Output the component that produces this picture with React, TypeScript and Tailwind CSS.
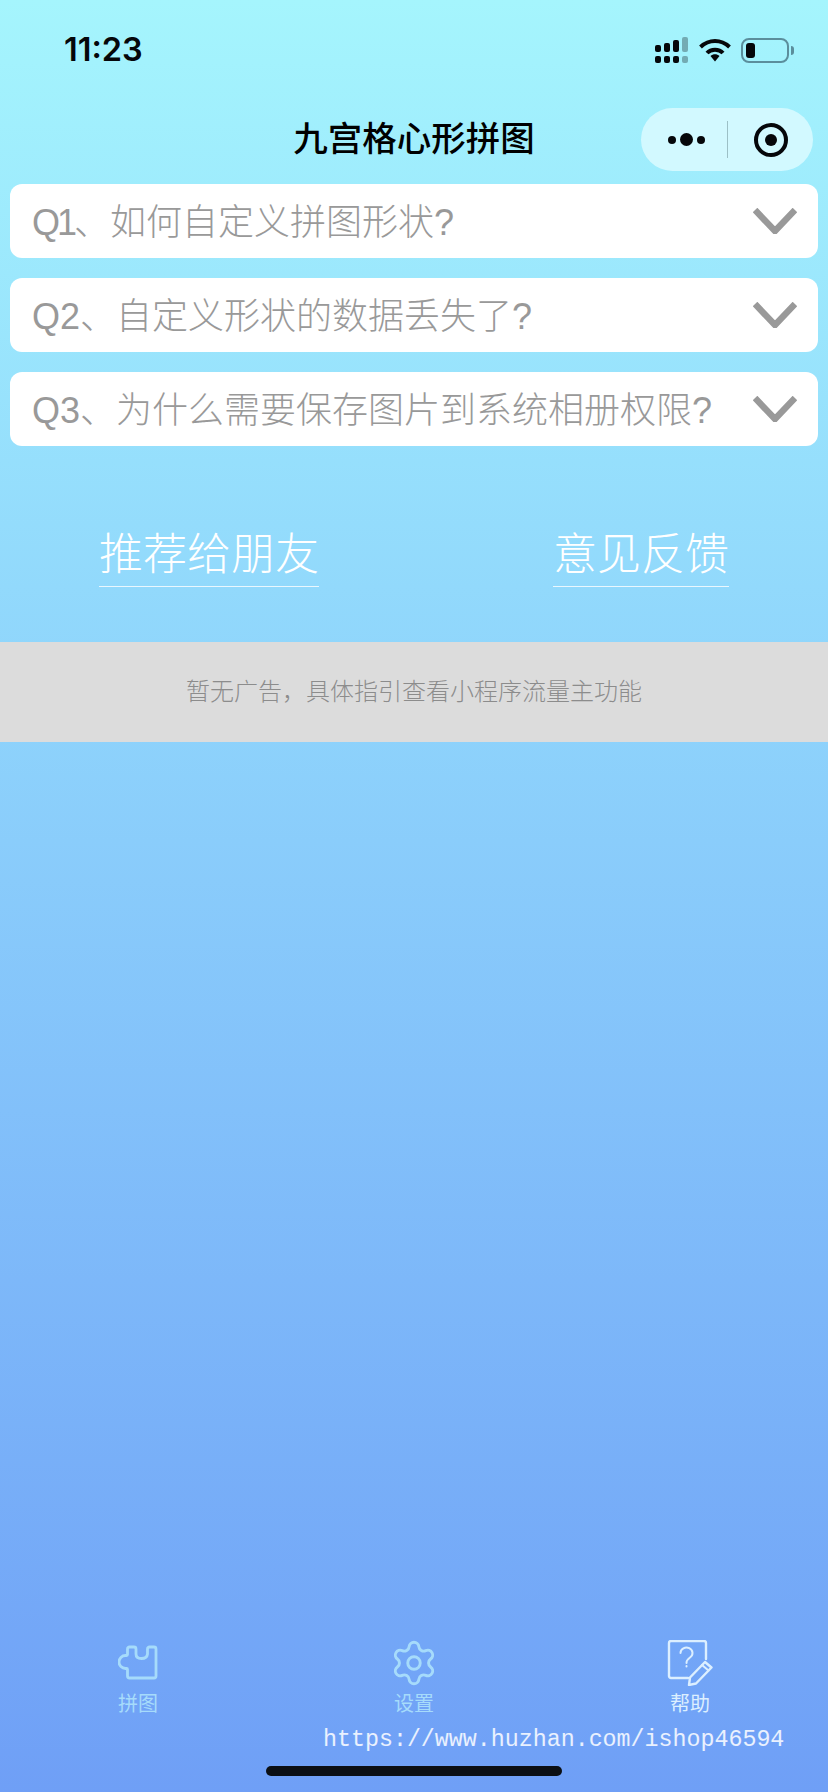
import React from "react";
import { Settings } from "lucide-react";

const questions = [
  { no: "Q1", text: "、如何自定义拼图形状?", narrow: true },
  { no: "Q2", text: "、自定义形状的数据丢失了?", narrow: false },
  { no: "Q3", text: "、为什么需要保存图片到系统相册权限?", narrow: false },
];

const SignalIcon = () => (
  <svg width="34" height="26" viewBox="0 0 34 26" fill="#05070a">
    <rect x="0" y="8" width="6" height="7" rx="2" />
    <rect x="9" y="6" width="6" height="9" rx="2" />
    <rect x="18" y="3" width="6" height="12" rx="2" />
    <rect x="27" y="0" width="6" height="15" rx="2" opacity="0.3" />
    <rect x="0" y="19" width="6" height="7" rx="2" />
    <rect x="9" y="19" width="6" height="7" rx="2" />
    <rect x="18" y="19" width="6" height="7" rx="2" />
    <rect x="27" y="19" width="6" height="7" rx="2" opacity="0.3" />
  </svg>
);

const WifiIcon = () => (
  <svg width="32" height="24" viewBox="0 0 32 24" fill="none" stroke="#05070a" strokeWidth="4">
    <path d="M1.500 9 C 10 1, 22 1, 30.500 9" />
    <path d="M8 15 C 12 10.5, 20 10.5, 24 15" />
    <path d="M11.5 18 L16 23.5 L20.5 18 C 18 15.5, 14 15.5, 11.5 18 Z" fill="#05070a" stroke="none" />
  </svg>
);

const BatteryIcon = () => (
  <div className="flex items-center gap-[2px]">
    <div className="w-[48px] h-[25px] rounded-[8px] border-2 border-[#5b8e9c] p-[3px]">
      <div className="w-[9px] h-full rounded-[3px] bg-[#05070a]" />
    </div>
    <div className="w-[3px] h-[9px] rounded-r-full bg-[#5b8e9c]" />
  </div>
);

const PuzzleIcon = () => (
  <svg width="40" height="36" viewBox="0 0 40 36" fill="none" stroke="currentColor" strokeWidth="2.8" strokeLinejoin="round">
    <path d="M11.500 2 H16 a2 2 0 0 1 2 2 V9 q0 4.500 5.500 4.500 T29.500 9 V4 a2 2 0 0 1 2-2 h4.500 a2 2 0 0 1 2 2 V31 a2 2 0 0 1-2 2 H11.500 a2 2 0 0 1-2-2 V24.500 q0-1-1-1 H7.500 a6.500 6.500 0 0 1 0-13 H8.500 q1 0 1-1 V4 a2 2 0 0 1 2-2 Z" />
  </svg>
);

const HelpIcon = () => (
  <svg width="46" height="46" viewBox="0 0 46 46" fill="none" stroke="currentColor" strokeWidth="2.4" strokeLinecap="round" strokeLinejoin="round">
    <path d="M21 38 H4 a2 2 0 0 1-2-2 V3 a2 2 0 0 1 2-2 h33 a2 2 0 0 1 2 2 v16" />
    <path d="M13.500 13 a6 5.500 0 1 1 9.500 4.500 q-3.500 2.500 -3.500 5.500" strokeWidth="2" />
    <path d="M19.500 26 v0.500" strokeWidth="2" />
    <path d="M22 45 L23 37.500 L38 22 L44.500 27.500 L29 43.500 Z" />
    <path d="M35 25 L41.500 30.500" strokeWidth="2" />
  </svg>
);

const tabs = [
  { label: "拼图", icon: <PuzzleIcon />, active: false },
  { label: "设置", icon: <Settings size={50} strokeWidth={1.4} />, active: false },
  { label: "帮助", icon: <HelpIcon />, active: true },
];

export default function App() {
  return (
    <div className="relative flex flex-col min-h-[1792px] w-[828px] overflow-hidden bg-gradient-to-b from-[#a5f5fd] to-[#6f9ff6] font-['Liberation_Sans','Noto_Sans_CJK_SC',sans-serif]">
      {/* status bar */}
      <div className="flex items-center justify-between h-[100px] pl-[64px] pr-[34px]">
        <span className="font-['Inter',sans-serif] text-[32.5px] font-semibold text-[#05070a]">11:23</span>
        <div className="flex items-center gap-[10px]">
          <SignalIcon />
          <WifiIcon />
          <BatteryIcon />
        </div>
      </div>

      {/* nav */}
      <div className="grid grid-cols-[1fr_auto_1fr] items-center h-[84px] pt-[8px] pb-[13px] px-[15px]">
        <div />
        <h1 className="text-[34.5px] font-medium text-black">九宫格心形拼图</h1>
        <div className="flex justify-end">
          <div className="flex items-center w-[172px] h-[63px] rounded-full bg-[#d2f9ff]">
            <div className="flex items-center justify-center gap-[4px] w-[86px] h-full pl-[4px]">
              <span className="w-[8px] h-[8px] rounded-full bg-[#05070a]" />
              <span className="w-[13px] h-[13px] rounded-full bg-[#05070a]" />
              <span className="w-[8px] h-[8px] rounded-full bg-[#05070a]" />
            </div>
            <div className="w-px h-[37px] bg-[#9cc0c6]" />
            <div className="flex items-center justify-center flex-1 h-full pl-[1px]">
              <div className="flex items-center justify-center w-[34px] h-[34px] rounded-full border-[4px] border-[#05070a]">
                <div className="w-[12px] h-[12px] rounded-full bg-[#05070a]" />
              </div>
            </div>
          </div>
        </div>
      </div>

      {/* questions */}
      <div className="flex flex-col gap-[20px] mx-[10px]">
        {questions.map((q) => (
          <div key={q.no} className="flex items-center justify-between h-[74px] pl-[22px] pr-[21px] rounded-[12px] bg-white">
            <span className="pt-[4px] text-[36px] leading-none font-light text-[#999999] whitespace-nowrap">
              <span className={q.narrow ? "tracking-[-3px]" : ""}>{q.no}</span>
              {q.text}
            </span>
            <svg width="44" height="26" viewBox="0 0 44 26" fill="none" stroke="#999999" strokeWidth="6.500">
              <path d="M2 2 L22 23 L42 2" />
            </svg>
          </div>
        ))}
      </div>

      {/* links */}
      <div className="flex justify-between mt-[81px] px-[99px]">
        <div className="text-[44px] leading-[56px] pb-[3px] font-light text-white border-b border-white/80">推荐给朋友</div>
        <div className="text-[44px] leading-[56px] pb-[3px] font-light text-white border-b border-white/80">意见反馈</div>
      </div>

      {/* ad placeholder */}
      <div className="flex items-center justify-center h-[100px] mt-[55px] bg-[#dcdcdc]">
        <span className="text-[24px] font-light text-[#8c8c8c]">暂无广告，具体指引查看小程序流量主功能</span>
      </div>

      {/* tab bar */}
      <div className="grid grid-cols-3 mt-auto">
        {tabs.map((t) => (
          <div key={t.label} className={`flex flex-col items-center ${t.active ? "text-[#dcefff]" : "text-[#a6dbfb]"}`}>
            <div className="flex items-center justify-center h-[48px]">{t.icon}</div>
            <span className="mt-[3px] text-[20px] leading-[28px]">{t.label}</span>
          </div>
        ))}
      </div>
      <div className="w-[296px] h-[10px] mx-auto mt-[48px] mb-[16px] rounded-full bg-[#0b0f14]" />

      {/* watermark */}
      <div className="absolute left-[323px] top-[1724px] font-['Liberation_Mono',monospace] text-[23.3px] leading-[32px] text-white/85 whitespace-nowrap">
        https://www.huzhan.com/ishop46594
      </div>
    </div>
  );
}
